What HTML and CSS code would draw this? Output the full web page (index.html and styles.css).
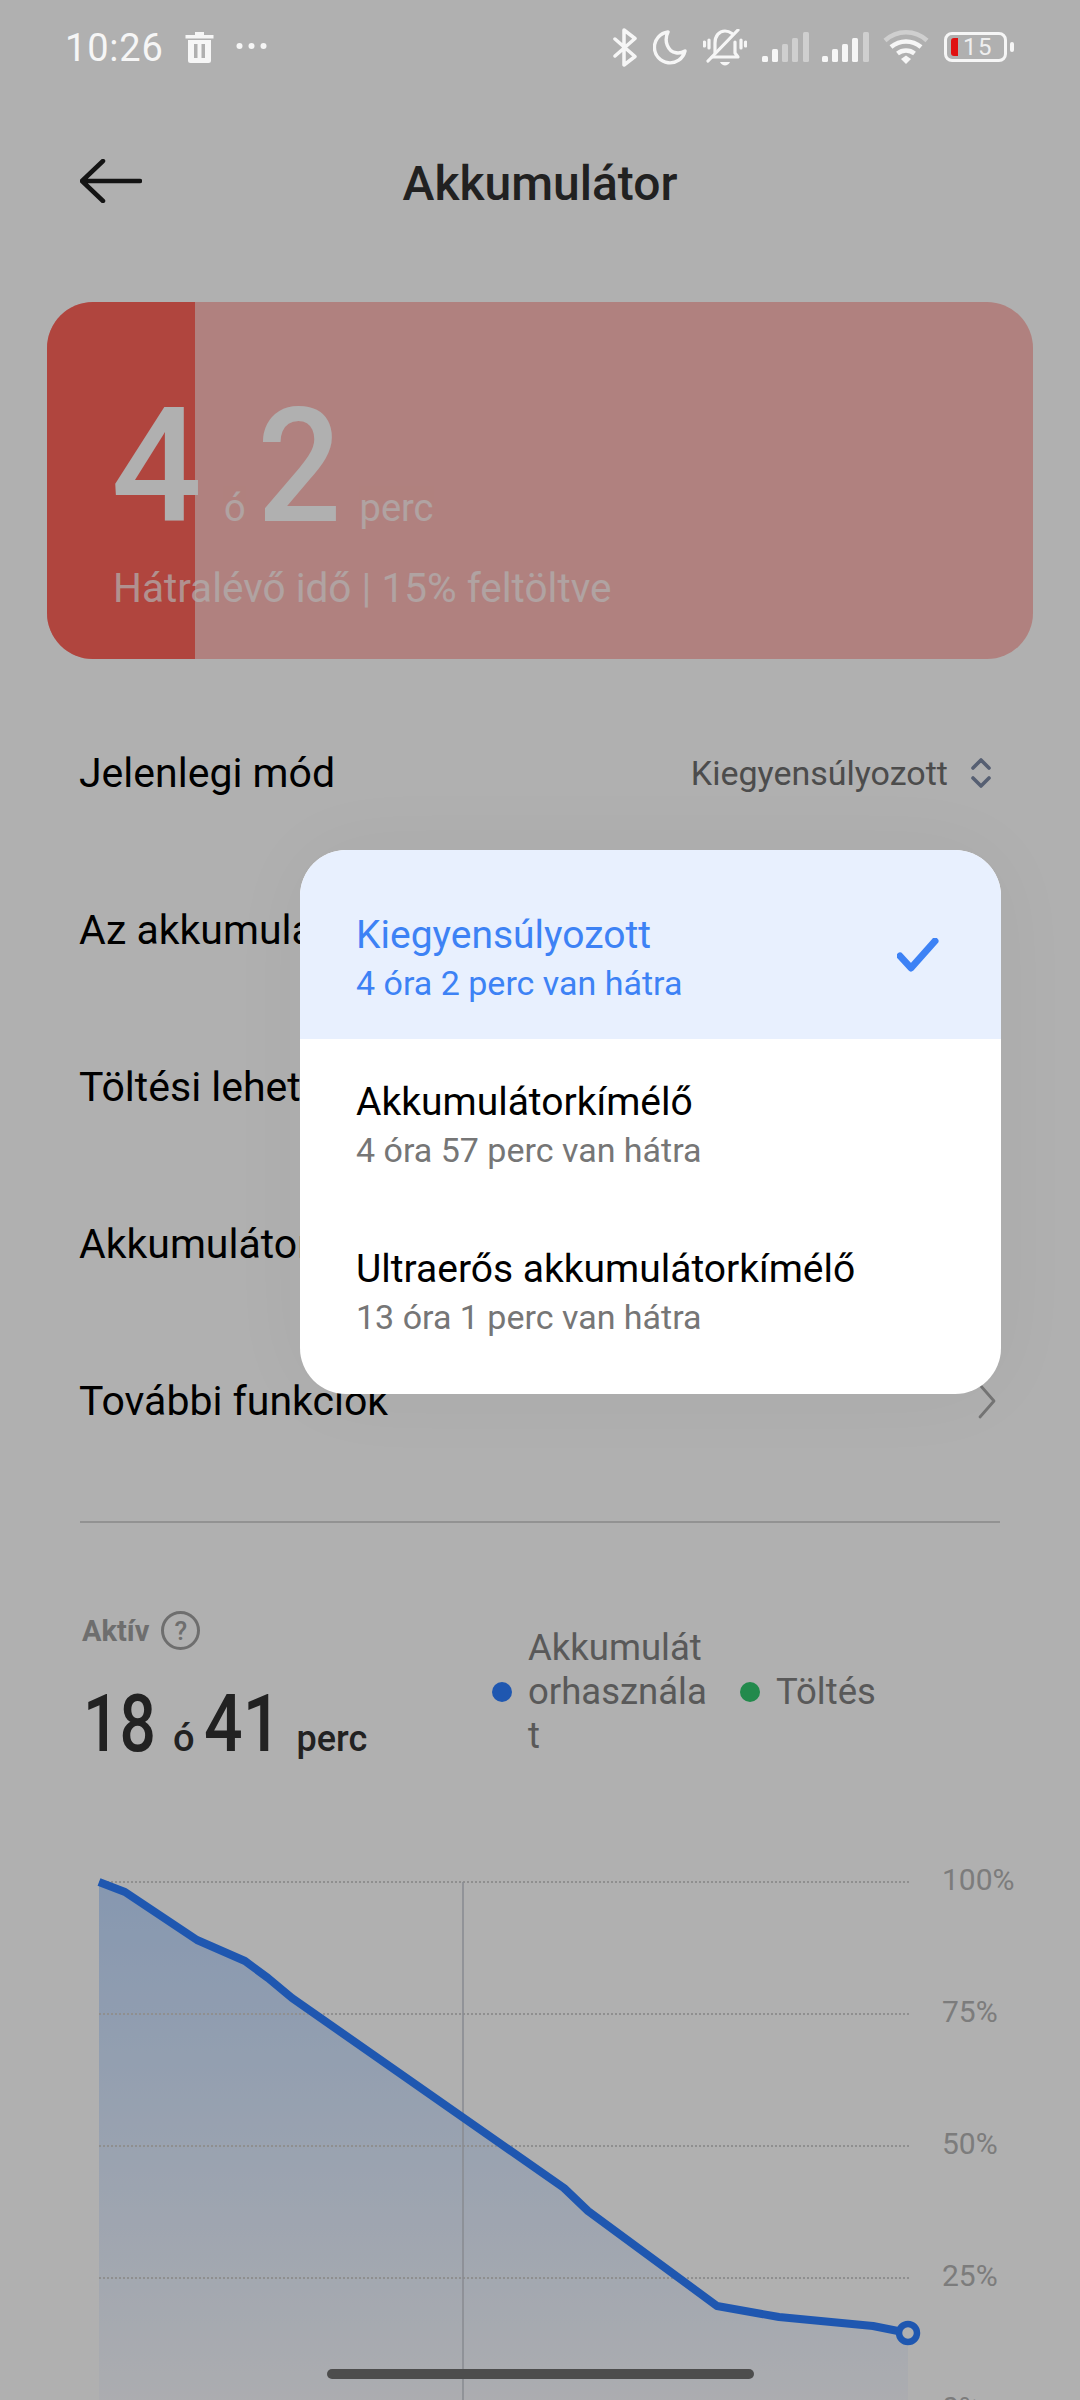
FILE: index.html
```html
<!DOCTYPE html>
<html lang="hu">
<head>
<meta charset="utf-8">
<title>Akkumulátor</title>
<link rel="stylesheet" href="styles.css">
</head>
<body>
<div class="screen">
  <header class="status">
    <div class="status-left">
      <span class="time">10:26</span>
      <svg class="ic-trash" viewBox="0 0 29 31"><path d="M10 0h9v3h9.500v3.500H.5V3H10zM3 8h23v20.500a2.500 2.500 0 0 1-2.500 2.500h-18A2.500 2.500 0 0 1 3 28.500zm6 4v14h3.500V12zm7.500 0v14H20V12z" fill="#f6f6f6" fill-rule="evenodd"/></svg>
      <svg class="ic-dots" viewBox="0 0 31 8"><circle cx="3.500" cy="4" r="3" fill="#f6f6f6"/><circle cx="15.500" cy="4" r="3" fill="#f6f6f6"/><circle cx="27.500" cy="4" r="3" fill="#f6f6f6"/></svg>
    </div>
    <div class="status-right">
      <svg class="ic-bt" viewBox="0 0 24 39"><path d="M2 11l20 17.500L11 37V2l11 8.500L2 28" fill="none" stroke="#f6f6f6" stroke-width="3.500" stroke-linecap="round" stroke-linejoin="round"/></svg>
      <svg class="ic-moon" viewBox="0 0 34 35"><path d="M15 2A15.500 15.500 0 1 0 32 21c-3 1.800-6 2.300-9 1.800C15 21.500 10.500 11 15 2z" fill="none" stroke="#f6f6f6" stroke-width="3.400" stroke-linejoin="round"/></svg>
      <svg class="ic-bell" viewBox="0 0 44 37"><g fill="none" stroke="#f6f6f6" stroke-width="3.200" stroke-linecap="round" stroke-linejoin="round"><path d="M12 24V14C12 7 16 2 22 2c3 0 5 1 7 2.500M32 13v11l3 4H9"/><path d="M35 1L5 32"/><path d="M6 11v8M1.500 13v4M38 11v8M42.500 13v4"/></g><path d="M17 33h10c-1 2-3 3.500-5 3.500s-4-1.500-5-3.500z" fill="#f6f6f6"/></svg>
      <svg class="ic-sig1" viewBox="0 0 47 30"><g fill="#f6f6f6"><rect x="0" y="24" width="6" height="6" rx="1.500"/><rect x="10" y="17" width="6" height="13" rx="1.500"/></g><g fill="#cfcfcf"><rect x="20" y="12" width="6" height="18" rx="1.500"/><rect x="30" y="6" width="6" height="24" rx="1.500"/><rect x="41" y="0" width="6" height="30" rx="1.500"/></g></svg>
      <svg class="ic-sig2" viewBox="0 0 47 30"><g fill="#f6f6f6"><rect x="0" y="24" width="6" height="6" rx="1.500"/><rect x="10" y="17" width="6" height="13" rx="1.500"/><rect x="20" y="12" width="6" height="18" rx="1.500"/><rect x="30" y="6" width="6" height="24" rx="1.500"/></g><rect x="41" y="0" width="6" height="30" rx="1.500" fill="#cfcfcf"/></svg>
      <svg class="ic-wifi" viewBox="0 0 46 34"><g fill="none" stroke-width="4.500"><path d="M2 10.500C14-.5 32-.5 44 10.500" stroke="#cfcfcf"/><path d="M8 17c9-7.500 21-7.500 30 0" stroke="#f6f6f6"/><path d="M14.500 23.500c5-4 12-4 17 0" stroke="#f6f6f6"/></g><path d="M18 29l5-3.500 5 3.500-5 5z" fill="#f6f6f6"/></svg>
      <div class="battery">
        <div class="batt-body">
          <span class="batt-level"></span>
          <span class="batt-num">15</span>
        </div>
        <span class="batt-nub"></span>
      </div>
    </div>
  </header>

  <div class="topbar">
    <svg class="ic-back" viewBox="0 0 62 44"><path d="M23 2L2 22l21 20M2 22h58" fill="none" stroke="#1e1e1e" stroke-width="4.500" stroke-linecap="round" stroke-linejoin="round"/></svg>
    <h1 class="title">Akkumulátor</h1>
  </div>

  <section class="card">
    <div class="card-fill"></div>
    <div class="card-body">
      <div class="card-time"><span class="big">4</span><span class="small o">ó</span><span class="big two">2</span><span class="small p">perc</span></div>
      <div class="card-sub">Hátralévő idő | 15% feltöltve</div>
    </div>
  </section>

  <ul class="rows">
    <li class="row"><span>Jelenlegi mód</span><span class="row-value">Kiegyensúlyozott<svg class="ic-updown" viewBox="0 0 22 30"><path d="M3 10l8-8 8 8M3 20l8 8 8-8" fill="none" stroke="#7d8aa6" stroke-width="3.600" stroke-linecap="round" stroke-linejoin="round"/></svg></span></li>
    <li class="row"><span>Az akkumulátor használata</span></li>
    <li class="row"><span>Töltési lehetőségek</span></li>
    <li class="row"><span>Akkumulátor állapota</span></li>
    <li class="row"><span>További funkciók</span><svg class="ic-chev" viewBox="0 0 18 36"><path d="M2 2l14 16L2 34" fill="none" stroke="#a8a8a8" stroke-width="2.800" stroke-linecap="round" stroke-linejoin="round"/></svg></li>
  </ul>

  <hr class="divider">

  <section class="stats">
    <div class="stats-left">
      <div class="active"><span>Aktív</span><span class="help">?</span></div>
      <div class="total"><span class="num">18</span><span class="unit-o">ó</span><span class="num wide">41</span><span class="unit-p">perc</span></div>
    </div>
    <div class="legend">
      <div class="legend-item"><span class="dot dot-blue"></span><span class="legend-text wrap">Akkumulátorhasználat</span></div>
      <div class="legend-item"><span class="dot dot-green"></span><span class="legend-text">Töltés</span></div>
    </div>
  </section>

  <svg class="chart" viewBox="0 1860 1080 540">
    <defs>
      <linearGradient id="area" x1="0" y1="0" x2="0" y2="1">
        <stop offset="0" stop-color="#c3dcff"/>
        <stop offset="1" stop-color="#fafbff"/>
      </linearGradient>
    </defs>
    <path d="M99 1882L125 1892 197 1940 245 1961 268 1978 292 1998 564 2188 588 2211 717 2306 779 2317 873 2326 908 2333V2410H99z" fill="url(#area)"/>
    <g class="grid">
      <line x1="99" y1="1882" x2="910" y2="1882"/>
      <line x1="99" y1="2014" x2="910" y2="2014"/>
      <line x1="99" y1="2146" x2="910" y2="2146"/>
      <line x1="99" y1="2278" x2="910" y2="2278"/>
    </g>
    <line class="vline" x1="463" y1="1882" x2="463" y2="2400"/>
    <path class="curve" d="M99 1882L125 1892 197 1940 245 1961 268 1978 292 1998 564 2188 588 2211 717 2306 779 2317 873 2326 908 2333"/>
    <circle class="endpoint" cx="908" cy="2333" r="9"/>
    <text class="axis" x="942" y="1890">100%</text>
    <text class="axis" x="942" y="2022">75%</text>
    <text class="axis" x="942" y="2154">50%</text>
    <text class="axis" x="942" y="2286">25%</text>
    <text class="axis" x="942" y="2418">0%</text>
  </svg>

  <div class="scrim"></div>

  <div class="popup">
    <div class="opt opt-on">
      <div class="opt-text"><div class="opt-title">Kiegyensúlyozott</div><div class="opt-sub">4 óra 2 perc van hátra</div></div>
      <svg class="ic-check" viewBox="0 0 42 34"><path d="M3 18l11 12L38 3" fill="none" stroke="#3d82f5" stroke-width="7" stroke-linecap="round" stroke-linejoin="round"/></svg>
    </div>
    <div class="opt">
      <div class="opt-text"><div class="opt-title">Akkumulátorkímélő</div><div class="opt-sub">4 óra 57 perc van hátra</div></div>
    </div>
    <div class="opt opt-last">
      <div class="opt-text"><div class="opt-title">Ultraerős akkumulátorkímélő</div><div class="opt-sub">13 óra 1 perc van hátra</div></div>
    </div>
  </div>

  <div class="homebar"></div>
</div>
</body>
</html>
```
FILE: styles.css
```css
* { box-sizing: border-box; }
html, body { margin: 0; padding: 0; background: #fff; }
.screen {
  position: relative;
  width: 1080px;
  height: 2400px;
  overflow: hidden;
  background: #fff;
  font-family: Roboto, "Noto Sans", sans-serif;
  color: #000;
}

/* status bar */
.status {
  position: relative;
  z-index: 3;
  height: 92px;
  padding: 2px 66px 0 65px;
  display: flex;
  align-items: center;
  justify-content: space-between;
  color: #f6f6f6;
}
.status-left { display: flex; align-items: center; }
.time { font-size: 38px; line-height: 44px; letter-spacing: .8px; width: 120px; padding-top: 2px; }
.ic-trash { width: 29px; height: 31px; }
.ic-dots { width: 31px; height: 8px; margin-left: 22px; margin-top: -3px; }
.status-right { display: flex; align-items: center; }
.status-right svg { display: block; flex: none; }
.ic-bt { width: 24px; height: 39px; }
.ic-moon { width: 34px; height: 35px; margin-left: 16px; }
.ic-bell { width: 44px; height: 37px; margin-left: 16px; }
.ic-sig1 { width: 47px; height: 30px; margin-left: 15px; }
.ic-sig2 { width: 47px; height: 30px; margin-left: 13px; }
.ic-wifi { width: 46px; height: 34px; margin-left: 14px; }
.battery { display: flex; align-items: center; margin-left: 15px; }
.batt-body {
  position: relative;
  width: 63px;
  height: 30px;
  border: 3px solid #f6f6f6;
  border-radius: 8px;
  display: flex;
  align-items: center;
  padding-left: 16px;
}
.batt-level {
  position: absolute;
  left: 4px;
  top: 3px;
  width: 7px;
  height: 18px;
  background: #e01010;
  border-radius: 3px 0 0 3px;
}
.batt-num { font-size: 24px; line-height: 24px; letter-spacing: 1.5px; color: #efefef; }
.batt-nub { width: 4px; height: 10px; margin-left: 3px; background: #f6f6f6; border-radius: 2px; }

/* title bar */
.topbar {
  position: relative;
  height: 182px;
  display: flex;
  align-items: center;
  justify-content: center;
}
.ic-back { position: absolute; left: 80px; top: 67px; width: 62px; height: 44px; }
.title { margin: 0; font-size: 48px; font-weight: 500; color: #303030; }

/* battery card */
.card {
  position: relative;
  margin: 28px 47px 0 47px;
  height: 357px;
  border-radius: 46px;
  overflow: hidden;
  background: #ffbcb8;
}
.card-fill { position: absolute; left: 0; top: 0; bottom: 0; width: 148px; background: #ff645b; }
.card-body { position: relative; padding: 0 0 0 66px; color: #fff; }
.card-time { display: flex; align-items: baseline; height: 218px; line-height: 1; padding-top: 95px; margin-left: -2px; }
.big { font-size: 160px; font-weight: 500; line-height: 140px; }
.two { display: inline-block; width: 78px; transform: scaleX(.93); transform-origin: left; }
.small { font-size: 38px; opacity: .72; }
.o { margin: 0 11px 0 22px; }
.p { margin-left: 25px; }
.card-sub { margin-top: 45px; font-size: 40.500px; line-height: 46px; color: rgba(255, 255, 255, .72); }

/* rows */
.rows { list-style: none; margin: 35px 0 0; padding: 0 80px 0 79px; }
.row {
  height: 157px;
  display: flex;
  align-items: center;
  justify-content: space-between;
  font-size: 41px;
}
.row-value { display: flex; align-items: center; font-size: 34px; color: #6e6e6e; }
.ic-updown { width: 22px; height: 30px; margin-left: 22px; margin-right: 8px; }
.ic-chev { width: 18px; height: 36px; margin-right: 4px; }

.divider { margin: 42px 80px 0; border: 0; height: 2px; background: #d4d4d4; }

/* stats */
.stats {
  height: 337px;
  padding: 0 0 0 83px;
  display: flex;
  align-items: center;
}
.stats-left { width: 409px; padding-top: 7px; }
.active { display: flex; align-items: center; font-size: 29px; font-weight: 700; color: #a0a0a0; margin-top: -9px; margin-left: -1px; }
.help {
  width: 39px;
  height: 39px;
  margin-left: 12px;
  border: 3px solid #a0a0a0;
  border-radius: 50%;
  display: flex;
  align-items: center;
  justify-content: center;
  font-size: 26px;
  font-weight: 500;
}
.total { margin-top: 28px; display: flex; align-items: baseline; color: #323232; font-weight: 500; }
.num { display: inline-block; width: 72px; font-size: 80px; line-height: 92px; white-space: nowrap; transform: scaleX(.8); transform-origin: left; }
.wide { width: 76px; transform: scaleX(.85); }
.unit-o { font-size: 38px; margin: 0 9px 0 18px; }
.unit-p { font-size: 36px; margin-left: 17px; }
.legend { display: flex; align-items: center; }
.legend-item { display: flex; align-items: center; }
.legend-text { font-size: 36.500px; line-height: 44px; color: #828282; margin-left: 16px; }
.wrap { width: 187px; word-break: break-all; margin-right: 25px; }
.dot { width: 20px; height: 20px; border-radius: 50%; flex: none; }
.dot-blue { background: #2e7fff; }
.dot-green { background: #32c86e; }

/* chart */
.chart { display: block; width: 1080px; height: 540px; }
.grid line { stroke: #d0d0d0; stroke-width: 2; stroke-dasharray: 2 2; }
.vline { stroke: #c4c8d0; stroke-width: 1.500; }
.curve { fill: none; stroke: #2e7fff; stroke-width: 8; stroke-linejoin: round; }
.endpoint { fill: #fff; stroke: #2e7fff; stroke-width: 6.500; }
.axis { font-size: 30px; fill: #b4b4b4; font-family: Roboto, sans-serif; }

/* dialog layer */
.scrim { position: absolute; inset: 0; z-index: 1; background: rgba(0, 0, 0, .31); }
.popup {
  position: absolute;
  z-index: 2;
  left: 300px;
  top: 850px;
  width: 701px;
  height: 544px;
  border-radius: 46px;
  overflow: hidden;
  background: #fff;
  box-shadow: 0 0 90px rgba(0, 0, 0, .035);
}
.opt { height: 167px; padding: 0 56px; display: flex; align-items: center; justify-content: space-between; }
.opt .opt-text { padding-top: 6px; }
.opt-on { height: 189px; padding-top: 23px; background: #e8f0fe; color: #3d82f5; }
.opt-title { font-size: 39px; line-height: 48px; }
.opt-sub { font-size: 34px; line-height: 48px; color: #767676; }
.opt-on .opt-sub { color: #3d82f5; }
.ic-check { width: 42px; height: 34px; margin-right: 6px; margin-top: -2px; }
.homebar {
  position: absolute;
  z-index: 3;
  left: 327px;
  top: 2369px;
  width: 427px;
  height: 10px;
  border-radius: 5px;
  background: #4d4d4d;
}
```
